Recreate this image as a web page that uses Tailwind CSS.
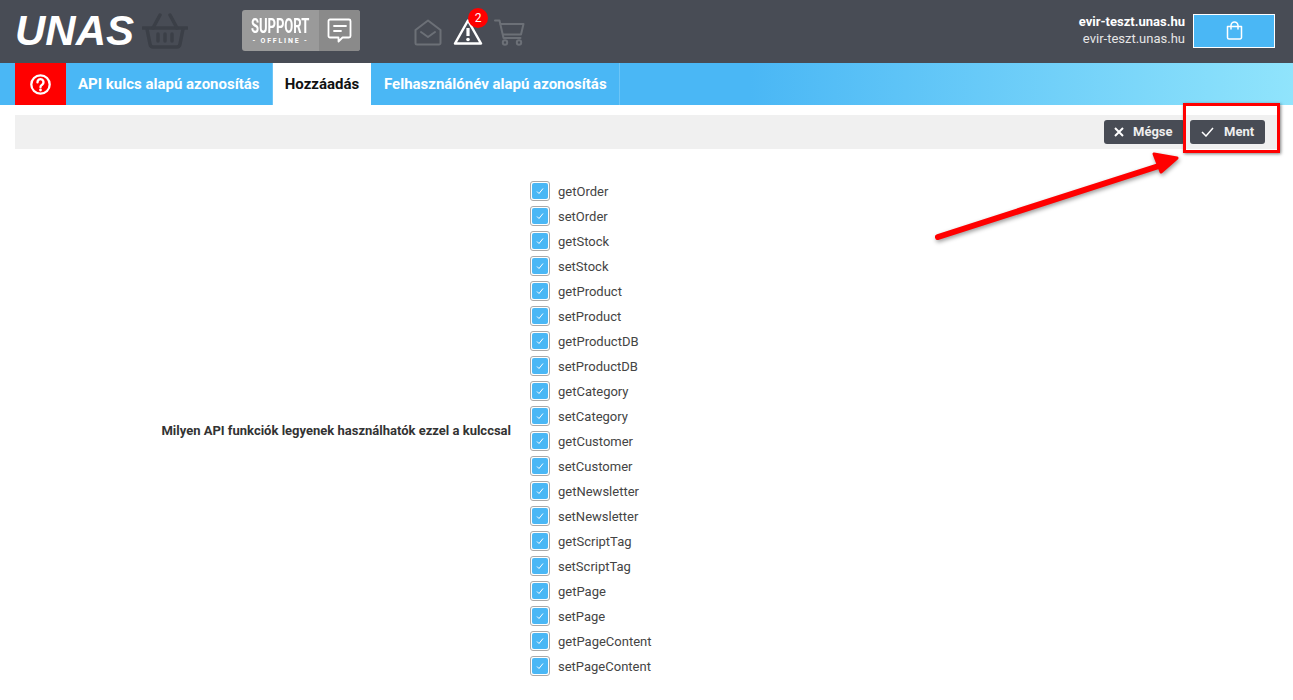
<!DOCTYPE html>
<html lang="en">
<head>
    <meta charset="UTF-8">
    <title>UNAS</title>
    <script src="https://cdn.jsdelivr.net/npm/@tailwindcss/browser@4"></script>
</head>
<body class="bg-white font-['Roboto',sans-serif] text-[#3a3a3a] overflow-hidden h-[700px] relative">
    <!-- Header -->
    <header class="h-[63px] bg-[#484c55] flex items-center pl-[15px] pr-[18px]">
        <div class="w-[118px] h-[63px] flex items-center overflow-visible">
            <span class="font-['Liberation_Sans',sans-serif] italic font-bold text-white text-[42px] leading-none -mt-[1px]">UNAS</span>
        </div>
        <svg class="ml-[9px] w-[46px] h-[36px] -mt-[1px]" viewBox="0 0 46 36" fill="none" stroke="#3b3f47" stroke-width="3.5">
            <path d="M1 15h44" stroke-linecap="round"/>
            <path d="M5 16l3 15q.5 3 3 3h24q2.500 0 3-3l3-15"/>
            <path d="M11 15L18 2M35 15L28 2" stroke-linecap="round"/>
            <path d="M16 21v7M23 21v7M30 21v7" stroke-linecap="round"/>
        </svg>
        <div class="ml-[54px] w-[118px] h-[41px] -mt-[2px] rounded-[3px] bg-[#9a9a9a] flex overflow-hidden">
            <div class="w-[77px] flex flex-col items-center justify-center text-white">
                <span class="font-bold text-[21px] leading-[21px] scale-x-[0.62] whitespace-nowrap">SUPPORT</span>
                <span class="font-bold text-[7px] leading-[9px] tracking-[1.800px] whitespace-nowrap">- OFFLINE -</span>
            </div>
            <div class="flex-1 bg-[#8a8a8a] flex items-center justify-center">
                <svg class="w-[25px] h-[25px]" viewBox="0 0 25 25" fill="none" stroke="#fff" stroke-width="1.800" stroke-linejoin="round" stroke-linecap="round">
                    <path d="M3 1.500h19a1.500 1.500 0 0 1 1.500 1.500v15a1.500 1.500 0 0 1-1.500 1.500h-6.500l-4 4v-4H3A1.500 1.500 0 0 1 1.500 18V3A1.500 1.500 0 0 1 3 1.500z"/>
                    <path d="M7 8h12M7 13h7"/>
                </svg>
            </div>
        </div>
        <svg class="ml-[54px] w-[28px] h-[27px] mt-[1px]" viewBox="0 0 28 27" fill="none" stroke="#6c7077" stroke-width="2" stroke-linejoin="round" stroke-linecap="round">
            <path d="M1.500 11L14 1.500 26.500 11v13a1.500 1.500 0 0 1-1.500 1.500H3A1.500 1.500 0 0 1 1.500 24z"/>
            <path d="M7 13l7 5 7-5"/>
        </svg>
        <div class="relative ml-[11px] w-[30px] h-[28px] mt-[1px]">
            <svg class="w-[30px] h-[28px]" viewBox="0 0 30 28" fill="none">
                <path d="M15 2.500L28 25.500H2z" stroke="#fff" stroke-width="2.500" stroke-linejoin="round"/>
                <path d="M15 10v8" stroke="#fff" stroke-width="3.200"/>
                <circle cx="15" cy="21.500" r="1.800" fill="#fff"/>
            </svg>
            <span class="absolute left-[15px] top-[-10px] w-5 h-5 rounded-full bg-[#ff0000] text-white text-xs leading-5 text-center">2</span>
        </div>
        <svg class="ml-[11px] w-[31px] h-[27px] mt-[1px]" viewBox="0 0 31 27" fill="none" stroke="#6c7077" stroke-width="2" stroke-linejoin="round" stroke-linecap="round">
            <path d="M1 1.500h4.500l4 17.500h17"/>
            <path d="M6.500 5h23l-2.500 10.500H9"/>
            <circle cx="11" cy="23.500" r="2.200"/>
            <circle cx="25" cy="23.500" r="2.200"/>
        </svg>
        <div class="ml-auto mb-[4px] text-right text-[13px] leading-[17px] text-white">
            <div class="font-bold">evir-teszt.unas.hu</div>
            <div class="text-[#e6e6e6]">evir-teszt.unas.hu</div>
        </div>
        <div class="ml-[8px] mb-[2px] w-[82px] h-[34px] bg-[#4ab7f5] border border-white flex items-center justify-center">
            <svg class="w-[17px] h-[19px]" viewBox="0 0 17 19" fill="none" stroke="#fff" stroke-width="1.500" stroke-linejoin="round">
                <path d="M1.500 5.500h14v11a1.500 1.500 0 0 1-1.500 1.500H3a1.500 1.500 0 0 1-1.500-1.500z"/>
                <path d="M5 8V4.500a3.500 3.500 0 0 1 7 0V8" stroke-linecap="round"/>
            </svg>
        </div>
    </header>

    <!-- Tabs -->
    <nav class="h-[42px] pl-[15px] flex bg-[linear-gradient(90deg,#4ab7f5_0%,#4ab7f5_58%,#90e4fc_100%)] text-[15px] font-bold text-white">
        <div class="w-[51px] bg-[#ff0000] flex items-center justify-center">
            <svg class="w-[21px] h-[21px]" viewBox="0 0 21 21" fill="none" stroke="#fff" stroke-width="2.300">
                <circle cx="10.500" cy="10.500" r="9.200"/>
                <path d="M7.500 8.200a3 3 0 1 1 4.600 2.500c-1 .6-1.600 1.200-1.600 2.300" stroke-linecap="round" stroke-width="2.400"/>
                <circle cx="10.500" cy="16" r="1.400" fill="#fff" stroke="none"/>
            </svg>
        </div>
        <div class="px-[12px] w-[207px] flex items-center border-r border-[#6cc5f7] whitespace-nowrap">API kulcs alapú azonosítás</div>
        <div class="w-[98px] bg-white text-[#111] flex items-center justify-center">Hozzáadás</div>
        <div class="w-[249px] px-[13px] flex items-center border-r border-[#6cc5f7] whitespace-nowrap">Felhasználónév alapú azonosítás</div>
    </nav>

    <!-- Toolbar -->
    <div class="mt-[10px] ml-[15px] mr-[15px] h-[34px] bg-[#f0f0f0] flex items-center justify-end pr-[13px] gap-[5px] text-[13px] font-bold text-[#eee]">
        <div class="w-[81px] h-6 rounded-[3px] bg-[#484c55] flex items-center pl-[10px] gap-[9px]">
            <svg class="w-[10px] h-[10px]" viewBox="0 0 10 10" stroke="#fff" stroke-width="2"><path d="M1 1l8 8M9 1l-8 8"/></svg>
            <span>Mégse</span>
        </div>
        <div class="w-[75px] h-6 rounded-[3px] bg-[#484c55] flex items-center pl-[11px] gap-[10px]">
            <svg class="w-[13px] h-[10px]" viewBox="0 0 13 10" fill="none" stroke="#fff" stroke-width="1.500"><path d="M1 5l4 4 7-8"/></svg>
            <span>Ment</span>
        </div>
    </div>

    <!-- Form -->
    <main class="mt-[30px] flex items-center">
        <label class="w-[511px] text-right text-[13px] font-bold text-[#333] mt-[4px] shrink-0">Milyen API funkciók legyenek használhatók ezzel a kulccsal</label>
        <ul class="ml-[19px] text-[13px] text-[#444]" id="list">
            <li class="h-[25px] flex items-center gap-2"><span class="mb-[2px] w-5 h-5 rounded-[3px] border border-[#aaa] flex items-center justify-center"><span class="w-4 h-4 rounded-[2px] bg-[#4ab7f5] flex items-center justify-center"><svg class="w-2 h-2" viewBox="0 0 8 8" fill="none" stroke="#fff" stroke-width="1"><path d="M1 4.500l2 2 4-5"/></svg></span></span>getOrder</li>
            <li class="h-[25px] flex items-center gap-2"><span class="mb-[2px] w-5 h-5 rounded-[3px] border border-[#aaa] flex items-center justify-center"><span class="w-4 h-4 rounded-[2px] bg-[#4ab7f5] flex items-center justify-center"><svg class="w-2 h-2" viewBox="0 0 8 8" fill="none" stroke="#fff" stroke-width="1"><path d="M1 4.500l2 2 4-5"/></svg></span></span>setOrder</li>
        </ul>
    </main>

    <!-- Annotation -->
    <div class="absolute left-[1183px] top-[103px] w-[97px] h-[50px] border-[3px] border-[#ff0000] shadow-[1px_1px_3px_rgba(0,0,0,0.5)]"></div>
    <svg class="absolute left-[930px] top-[150px] drop-shadow-[1px_2px_2px_rgba(0,0,0,0.4)]" width="260" height="95" viewBox="0 0 260 95" fill="none">
        <path d="M8 87L235 14" stroke="#ff0000" stroke-width="6" stroke-linecap="round"/>
        <path d="M224 4L247 8 231 22z" fill="#ff0000" stroke="#ff0000" stroke-width="3" stroke-linejoin="round"/>
    </svg>

    <script>
        const names = ['getStock','setStock','getProduct','setProduct','getProductDB','setProductDB','getCategory','setCategory','getCustomer','setCustomer','getNewsletter','setNewsletter','getScriptTag','setScriptTag','getPage','setPage','getPageContent','setPageContent'];
        const list = document.getElementById('list');
        const tpl = list.firstElementChild;
        names.forEach(name => {
            const row = tpl.cloneNode(true);
            row.lastChild.textContent = name;
            list.appendChild(row);
        });
    </script>
</body>
</html>
